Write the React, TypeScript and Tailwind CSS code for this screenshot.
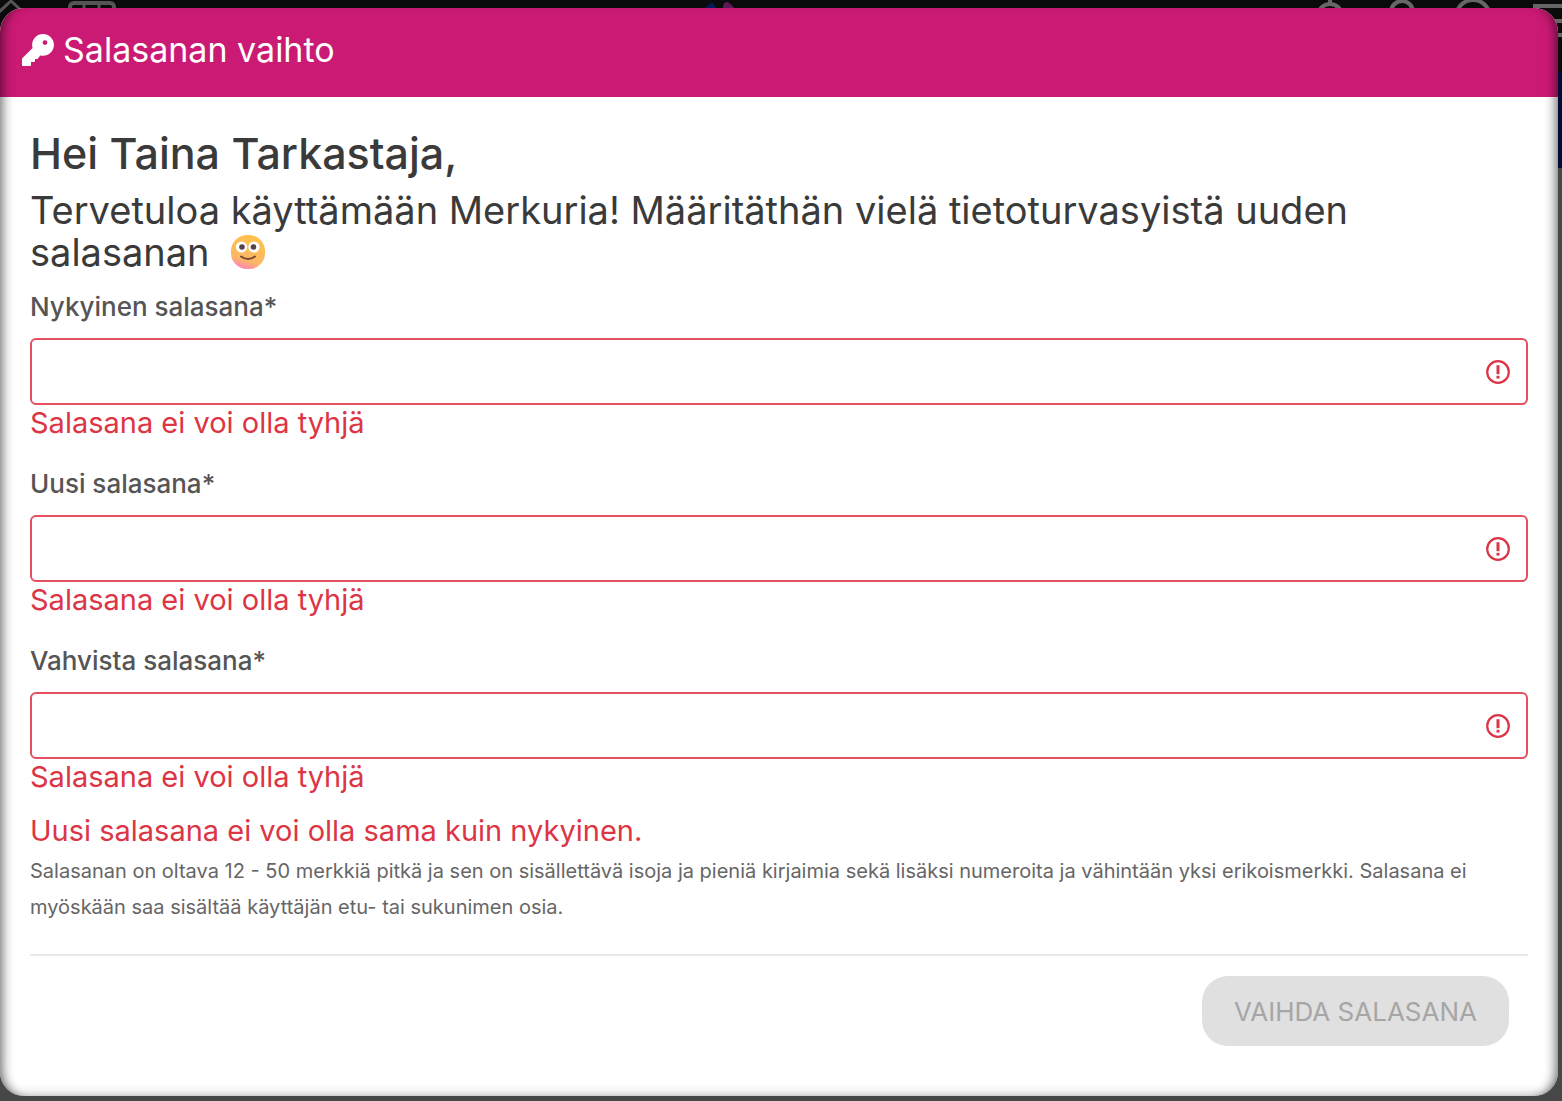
import { useState } from 'react'

type FieldProps = {
  id: string
  label: string
  value: string
  onChange: (value: string) => void
}

const KeyIcon = () => (
  <svg viewBox="0 0 32 32" className="size-8" fill="currentColor" aria-hidden="true">
    <path
      fillRule="evenodd"
      d="M21 0a10.9 10.9 0 0 1 0 21.8q-1.500 0-2.800-.3L16 24.500q-.4.500-1.200.500H13v2q0 1-1 1H9v3q0 1-1 1H1q-1 0-1-1v-6q0-.6.500-1.100L10.600 14Q10.100 12.500 10.100 11A10.900 10.900 0 0 1 21 0zM23 6.200a2.400 2.400 0 1 0 0 4.800a2.400 2.400 0 0 0 0-4.800z"
    />
  </svg>
)

const AlertIcon = () => (
  <svg viewBox="0 0 24 24" className="size-6" fill="none" stroke="#dc3545" aria-hidden="true">
    <circle cx="12" cy="12" r="10.8" strokeWidth="2.2" />
    <path d="M12 5.2v9" strokeWidth="3" />
    <path d="M12 15.800v2.800" strokeWidth="3" />
  </svg>
)

const Smiley = () => (
  <svg viewBox="0 0 36 36" className="ml-2.5 inline-block size-9 align-[-4px]" role="img" aria-label="hymiö">
    <defs>
      <linearGradient id="face" x1="0.7" y1="0" x2="0.4" y2="1">
        <stop offset="0" stopColor="#ffc24a" />
        <stop offset="0.75" stopColor="#fbb765" />
        <stop offset="1" stopColor="#ff86b4" />
      </linearGradient>
    </defs>
    <rect x="1" y="1" width="34" height="34" rx="16" fill="url(#face)" />
    <circle cx="11.5" cy="13" r="5.6" fill="#fff" />
    <circle cx="24" cy="13" r="5.6" fill="#fff" />
    <circle cx="12" cy="13" r="2.8" fill="#55434c" />
    <circle cx="23.5" cy="13" r="2.8" fill="#55434c" />
    <path d="M11 22.5q7 5 14 0" fill="none" stroke="#7a4a34" strokeWidth="2" strokeLinecap="round" />
  </svg>
)

const PasswordField = ({ id, label, value, onChange }: FieldProps) => (
  <div>
    <label htmlFor={id} className="block text-[26px] leading-9 font-medium text-[#555]">
      {label}
    </label>
    <div className="relative mt-[13px]">
      <input
        id={id}
        type="password"
        value={value}
        onChange={(e) => onChange(e.target.value)}
        aria-invalid={value === ''}
        className="block h-[67px] w-full rounded-md border-2 border-[#e4505f] bg-white pr-14 pl-4 text-[29px] outline-none"
      />
      <span className="pointer-events-none absolute inset-y-0 right-[18px] flex items-center">
        <AlertIcon />
      </span>
    </div>
    <p className="text-[29px] leading-9 text-[#dc3545]">Salasana ei voi olla tyhjä</p>
  </div>
)

// the dimmed page that stays visible round the dialog
const Backdrop = () => (
  <div className="absolute inset-0 flex flex-col bg-[#474747]" aria-hidden="true">
    <div className="h-[72px] bg-[#0b0b0b]">
      <svg className="absolute top-0 left-0 h-10 w-32" viewBox="0 0 128 40" fill="none" stroke="#555" strokeWidth="3">
        <path d="M-2 13L11 1l13 12" />
        <rect x="70" y="3" width="44" height="22" rx="4" strokeWidth="4" />
        <path d="M84 3v10M99 3v10" />
      </svg>
      <svg className="absolute top-0 left-1/2 -ml-[124px] h-10 w-32" viewBox="0 0 128 40">
        <path d="M48 8l7-6 4 6z" fill="#06195a" />
        <path d="M66 8q0-6 4-6 4 1 7 6z" fill="#5a1a55" />
      </svg>
      <svg className="absolute top-0 right-0 h-10 w-[262px]" viewBox="0 0 262 40" fill="none" stroke="#666" strokeWidth="4">
        <path d="M30 0v4" />
        <circle cx="30" cy="16" r="12" />
        <circle cx="102" cy="12" r="11" />
        <circle cx="173" cy="17" r="17" />
        <path d="M233 6h29M233 21h29M233 35h29" />
      </svg>
    </div>
    <div className="h-24 bg-[#020c36]" />
  </div>
)

const App = () => {
  const [current, setCurrent] = useState('')
  const [next, setNext] = useState('')
  const [confirm, setConfirm] = useState('')

  return (
    <div className="relative min-h-screen bg-[#474747] pt-2 pr-1 pb-[5px] font-['Inter','Open_Sans',sans-serif]">
      <Backdrop />
      <div role="dialog" aria-labelledby="dialog-title" className="relative overflow-hidden rounded-[24px] bg-white">
        <header className="flex h-[89px] items-center gap-[9px] bg-[#cb1a74] px-[22px] pb-1.5 text-white">
          <KeyIcon />
          <h1 id="dialog-title" className="text-[34px] leading-10">Salasanan vaihto</h1>
        </header>

        <form className="px-[30px] pt-[31px] pb-[50px]" onSubmit={(e) => e.preventDefault()}>
          <h2 className="text-[43px] leading-[50px] font-medium text-[#3a3a3a]">Hei Taina Tarkastaja,</h2>
          <p className="mt-[11px] text-[38px] leading-[42px] text-[#3a3a3a]">
            Tervetuloa käyttämään Merkuria! Määritäthän vielä tietoturvasyistä uuden{' '}
            <span className="whitespace-nowrap">salasanan <Smiley /></span>
          </p>

          <div className="mt-4 flex flex-col gap-[25px]">
            <PasswordField id="current" label="Nykyinen salasana*" value={current} onChange={setCurrent} />
            <PasswordField id="next" label="Uusi salasana*" value={next} onChange={setNext} />
            <PasswordField id="confirm" label="Vahvista salasana*" value={confirm} onChange={setConfirm} />
          </div>

          <p className="mt-[18px] text-[29px] leading-9 text-[#dc3545]">Uusi salasana ei voi olla sama kuin nykyinen.</p>
          <p className="mt-1 text-[20px] leading-9 text-[#666]">
            Salasanan on oltava 12 - 50 merkkiä pitkä ja sen on sisällettävä isoja ja pieniä kirjaimia sekä lisäksi numeroita ja vähintään yksi erikoismerkki. Salasana ei myöskään saa sisältää käyttäjän etu- tai sukunimen osia.
          </p>

          <div className="mt-[29px] flex justify-end border-t-2 border-[#e9e9e9] pt-5 pr-[19px]">
            <button type="submit" disabled className="h-[70px] rounded-[26px] bg-[#e0e0e0] px-8 text-[26px] text-[#a6a6a6]">
              VAIHDA SALASANA
            </button>
          </div>
        </form>
        <div className="pointer-events-none absolute inset-0 rounded-[24px] shadow-[inset_12px_0_12px_-10px_rgba(0,0,0,0.6),inset_-12px_0_12px_-10px_rgba(0,0,0,0.6),inset_0_-10px_12px_-10px_rgba(0,0,0,0.3)]" />
      </div>
    </div>
  )
}

export default App
